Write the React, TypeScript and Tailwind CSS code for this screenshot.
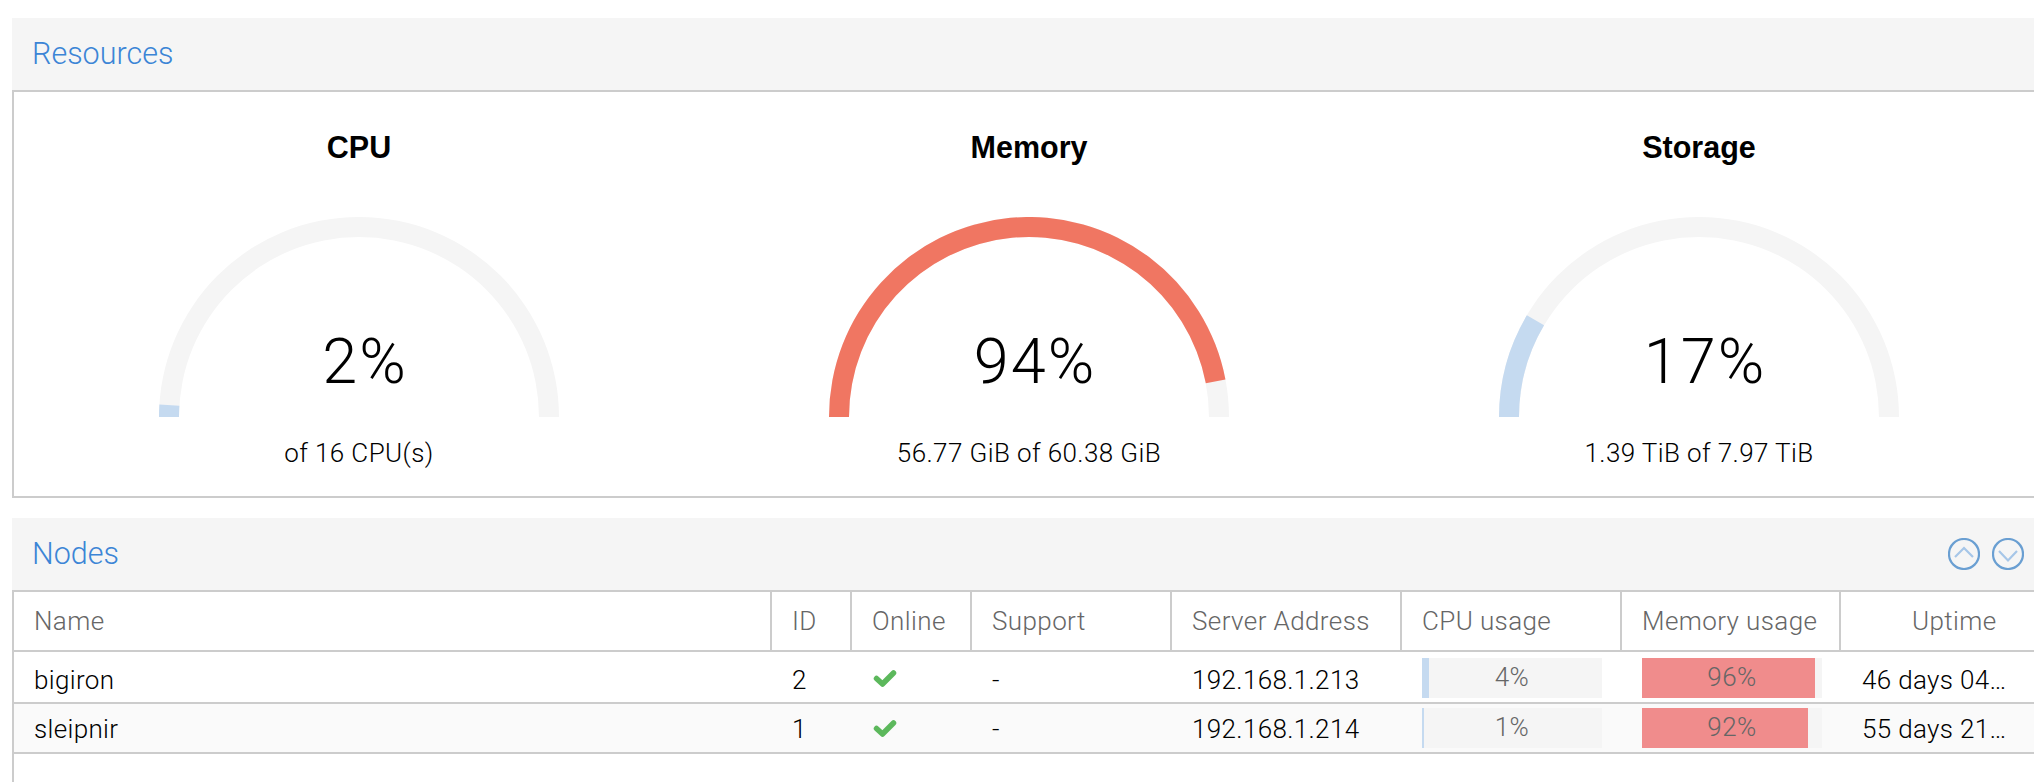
import React from "react";

const sector = (from: number, to: number) => {
  const pt = (r: number, p: number) => {
    const a = Math.PI * (1 - p);
    return `${(200 + r * Math.cos(a)).toFixed(2)} ${(200 - r * Math.sin(a)).toFixed(2)}`;
  };
  return `M${pt(200, from)} A200 200 0 0 1 ${pt(200, to)} L${pt(180, to)} A180 180 0 0 0 ${pt(180, from)} Z`;
};

function Gauge({ title, pct, sub, color }: { title: string; pct: number; sub: string; color: string }) {
  return (
    <div className="flex flex-col items-center text-black">
      <div className="mt-[36px] h-[38px] font-['Liberation_Sans',sans-serif] text-[30.5px] leading-[38px] font-bold">{title}</div>
      <div className="relative mt-[51px] h-[200px] w-[400px]">
        <svg width="400" height="200" viewBox="0 0 400 200" className="block">
          <path d={sector(0, 1)} fill="#f5f5f5" />
          <path d={sector(0, pct / 100)} fill={color} />
        </svg>
        <div className="absolute inset-x-0 top-[108px] pl-[12px] text-center text-[63px] leading-[74px] font-light tracking-[2px]">{pct}%</div>
      </div>
      <div className="mt-[18px] h-[36px] text-[26px] leading-[36px] font-light tracking-[0.4px]">{sub}</div>
    </div>
  );
}

function Header({ title, children }: { title: string; children?: React.ReactNode }) {
  return (
    <div className="flex h-[72px] items-center justify-between bg-[#f5f5f5] pr-[10px] pl-[20px]">
      <span className="pb-[1px] text-[30.5px] leading-[40px] font-light text-[#3c85d6]">{title}</span>
      {children}
    </div>
  );
}

function Round({ up }: { up?: boolean }) {
  return (
    <svg width="32" height="32" viewBox="0 0 32 32" fill="none">
      <circle cx="16" cy="16" r="15" stroke="#6a9fd2" strokeWidth="2.2" />
      <path d={up ? "M7 19 L16 10 L25 19" : "M7 13 L16 22.5 L25 13"} stroke="#a6c6e8" strokeWidth="2.2" />
    </svg>
  );
}

function Check() {
  return (
    <svg width="24" height="20" viewBox="0 0 24 20" fill="none">
      <path d="M3.5 10.5 L9.5 16 L20.5 5" stroke="#5cb85c" strokeWidth="5.5" strokeLinecap="round" strokeLinejoin="round" />
    </svg>
  );
}

function Bar({ pct, fill }: { pct: number; fill: string }) {
  return (
    <div className="relative h-[40px] w-[180px] bg-[#f5f5f5] text-center text-[26px] leading-[39px] font-light tracking-[0.5px] text-[#666]">
      <div className={`absolute inset-y-0 left-0 ${fill}`} style={{ width: `${pct}%` }} />
      <span className="relative">{pct}%</span>
    </div>
  );
}

const cols = [
  { w: "w-[758px]", label: "Name" },
  { w: "w-[80px]", label: "ID" },
  { w: "w-[120px]", label: "Online" },
  { w: "w-[200px]", label: "Support" },
  { w: "w-[230px]", label: "Server Address" },
  { w: "w-[220px]", label: "CPU usage" },
  { w: "w-[219px]", label: "Memory usage" },
];

function Row({ name, id, ip, cpu, mem, up, cls, top }: { name: string; id: string; ip: string; cpu: number; mem: number; up: string; cls: string; top: string }) {
  return (
    <div className={`flex border-b-2 border-[#ccc] text-[26px] font-light tracking-[0.35px] text-black ${cls}`}>
      <div className={`w-[758px] pl-[20px] ${top}`}>{name}</div>
      <div className={`w-[80px] pl-[20px] ${top}`}>{id}</div>
      <div className={`w-[120px] pl-[21px] ${top}`}>
        <div className="flex h-[40px] items-center">
          <Check />
        </div>
      </div>
      <div className={`w-[200px] pl-[20px] ${top}`}>-</div>
      <div className={`w-[230px] pl-[20px] ${top}`}>{ip}</div>
      <div className={`w-[220px] pl-[20px] ${top}`}>
        <Bar pct={cpu} fill="bg-[#c5daf0]" />
      </div>
      <div className={`w-[219px] pl-[20px] ${top}`}>
        <Bar pct={mem} fill="bg-[#f08c8c]" />
      </div>
      <div className={`flex-1 pl-[21px] ${top}`}>{up}</div>
    </div>
  );
}

export default function App() {
  return (
    <div className="h-[782px] overflow-hidden bg-white pt-[18px] pl-[12px] font-['Roboto',sans-serif]">
      <Header title="Resources" />
      <div className="grid h-[408px] grid-cols-[repeat(3,670px)] border-y-2 border-l-2 border-[#ccc] pl-[10px]">
        <Gauge title="CPU" pct={2} sub="of 16 CPU(s)" color="#c5daf0" />
        <Gauge title="Memory" pct={94} sub="56.77 GiB of 60.38 GiB" color="#f07662" />
        <Gauge title="Storage" pct={17} sub="1.39 TiB of 7.97 TiB" color="#c5daf0" />
      </div>
      <div className="mt-[20px]">
        <Header title="Nodes">
          <div className="flex gap-[12px]">
            <Round up />
            <Round />
          </div>
        </Header>
        <div className="h-[192px] border-t-2 border-l-2 border-[#ccc]">
          <div className="flex h-[60px] border-b-2 border-[#ccc] text-[26px] leading-[58px] font-light tracking-[0.4px] text-[#666]">
            {cols.map((c) => (
              <div key={c.label} className={`${c.w} border-r-2 border-[#ccc] pl-[20px]`}>
                {c.label}
              </div>
            ))}
            <div className="flex-1 pl-[71px]">Uptime</div>
          </div>
          <Row name="bigiron" id="2" ip="192.168.1.213" cpu={4} mem={96} up="46 days 04…" cls="h-[52px] leading-[44px]" top="pt-[6px]" />
          <Row name="sleipnir" id="1" ip="192.168.1.214" cpu={1} mem={92} up="55 days 21…" cls="h-[50px] leading-[42px] bg-[#fafafa]" top="pt-[4px]" />
        </div>
      </div>
    </div>
  );
}
